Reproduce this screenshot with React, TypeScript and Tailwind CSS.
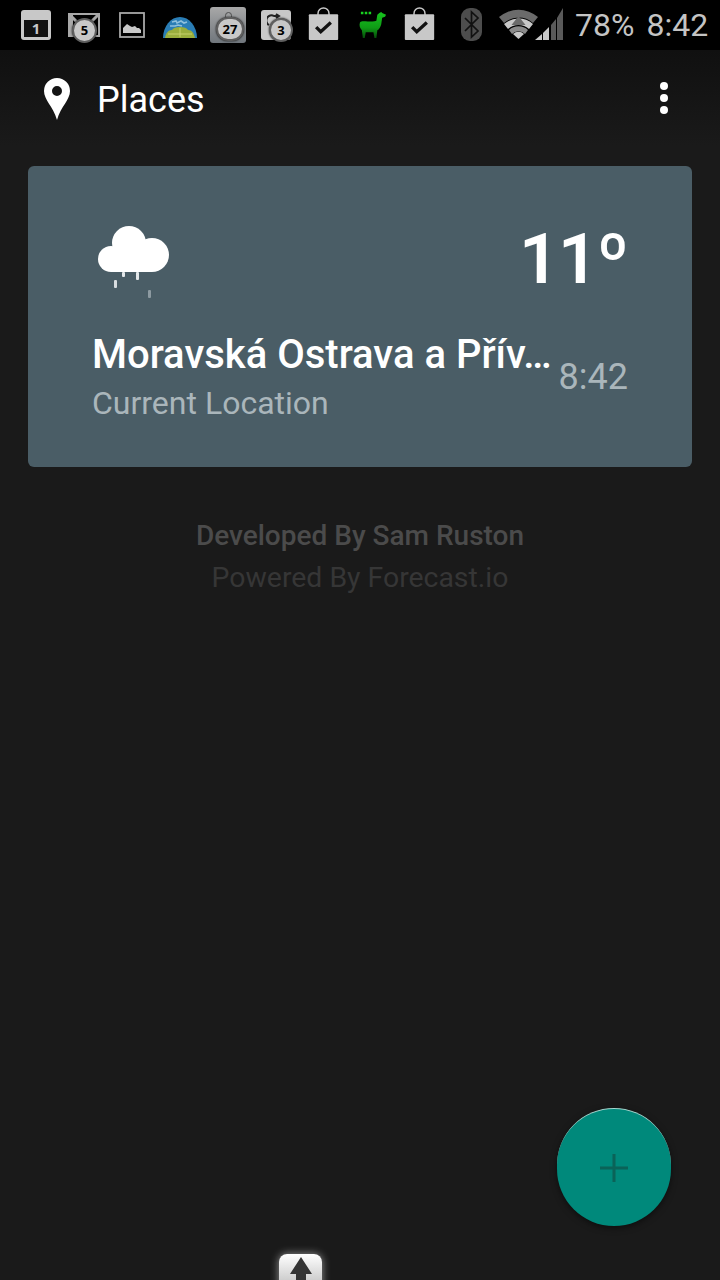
import { ReactNode } from "react";

const roboto = { fontFamily: "Roboto, sans-serif" };

const Badge = ({ value, className }: { value: string; className: string }) => (
  <span
    className={`absolute flex items-center justify-center rounded-full border-2 border-[#5f5f5f] bg-[#c8c8c8] text-[13px] font-bold leading-none text-black shadow-[0_0_2px_#000] ${className}`}
  >
    {value}
  </span>
);

const Slot = ({ className, children }: { className: string; children: ReactNode }) => (
  <div className={`relative h-[50px] shrink-0 ${className}`}>{children}</div>
);

const BagIcon = () => (
  <svg viewBox="0 0 32 36" className="absolute left-0 top-[7px] h-[33px] w-[31px]">
    <path d="M10 10V7a6 6 0 0 1 12 0v3" fill="none" stroke="#c8c8c8" strokeWidth="1.6" />
    <rect x="0" y="8" width="32" height="28" rx="1" fill="#c8c8c8" />
    <path d="M8 22l5 5 11-10" fill="none" stroke="#111" strokeWidth="3.6" />
  </svg>
);

const Llama = () => (
  <svg viewBox="0 0 30 32" className="absolute left-0 top-[9px] h-[31px] w-[29px]">
    <defs>
      <linearGradient id="llama" x1="0" y1="0" x2="0" y2="1">
        <stop offset="0" stopColor="#17c41e" />
        <stop offset="0.6" stopColor="#0f9c16" />
        <stop offset="1" stopColor="#064d0a" />
      </linearGradient>
    </defs>
    <path
      d="M22 4l2-1 1 1 4 2-1 2-3 1-1 7c-1 3-2 5-4 6l-1 8h-2l-1-6-8 0-1 6H5l-1-8c-2-2-3-5-2-8 2-2 5-1 8-1s7 0 9-1l1-6z"
      fill="url(#llama)"
    />
    <path d="M3 4h11" stroke="#19d321" strokeWidth="2.6" strokeDasharray="2.6 1.4" />
  </svg>
);

const StatusBar = () => (
  <div className="flex h-[50px] shrink-0 items-start bg-black pl-[21px]">
    {/* calendar */}
    <Slot className="w-[47px]">
      <div className="absolute left-0 top-[10px] h-[30px] w-[30px] rounded-[3px] bg-[#c8c8c8] pt-[10px]">
        <div className="mx-[3px] flex h-[17px] items-center justify-center bg-[#111] text-[15px] font-bold leading-none text-[#c8c8c8]">
          1
        </div>
      </div>
    </Slot>
    {/* gmail */}
    <Slot className="w-[51px]">
      <svg viewBox="0 0 32 24" className="absolute left-0 top-[13px] h-[24px] w-[32px]">
        <rect x="1" y="1" width="30" height="22" fill="none" stroke="#a8a8a8" strokeWidth="2" />
        <path d="M2 1h3v22H2z" fill="#a8a8a8" />
        <path d="M2 2l11 11v9M30 2L20 12" fill="none" stroke="#a8a8a8" strokeWidth="3" />
      </svg>
      <Badge value="5" className="left-[4px] top-[18px] h-[25px] w-[25px]" />
    </Slot>
    {/* gallery */}
    <Slot className="w-[44px]">
      <svg viewBox="0 0 26 26" className="absolute left-0 top-[12px] h-[26px] w-[26px]">
        <rect x="1" y="1" width="24" height="24" fill="none" stroke="#a8a8a8" strokeWidth="1.8" />
        <path d="M4 21v-5l4-4 3 2 2 1 3-1 2 2 2 0 2 2v3z" fill="#c8c8c8" />
      </svg>
    </Slot>
    {/* globe */}
    <Slot className="w-[47px]">
      <svg viewBox="0 0 34 21" className="absolute left-0 top-[17px] h-[21px] w-[34px]">
        <path d="M0 21a17 21 0 0 1 34 0z" fill="#2a7db5" />
        <path d="M9 5l4-1 1 2 4-2 3 2 3-1M7 9l5 0 3-1 4 1" fill="none" stroke="#8fc0dd" strokeWidth="1.6" />
        <path d="M2 21c1-5 3-8 7-8 1-2 4-3 8-3s7 1 8 3c4 0 6 3 7 8z" fill="#9aae3c" />
        <path d="M5 17h24M17 11v9" stroke="#c6d06c" strokeWidth="1" />
      </svg>
    </Slot>
    {/* 27 */}
    <Slot className="w-[51px]">
      <div className="absolute left-0 top-[7px] h-[36px] w-[36px] rounded-[3px] bg-gradient-to-b from-[#a8a8a8] to-[#70767c]" />
      <span className="absolute left-[15px] top-[12px] h-[8px] w-[7px] rounded-full border border-[#4c4c4c]" />
      <Badge value="27" className="left-[6px] top-[17px] h-[24px] w-[28px]" />
    </Slot>
    {/* 3 */}
    <Slot className="w-[47px]">
      <div className="absolute left-0 top-[10px] h-[30px] w-[30px] rounded-[3px] bg-[#c8c8c8]" />
      <svg viewBox="0 0 14 14" className="absolute left-[6px] top-[13px] h-[14px] w-[14px]">
        <path d="M2 12a5 5 0 0 1 5-9h5M9 1l3 2-3 2" fill="none" stroke="#222" strokeWidth="2" />
      </svg>
      <Badge value="3" className="left-[8px] top-[18px] h-[24px] w-[24px]" />
    </Slot>
    <Slot className="w-[50px]">
      <BagIcon />
    </Slot>
    <Slot className="w-[46px]">
      <Llama />
    </Slot>
    <Slot className="w-[57px]">
      <BagIcon />
    </Slot>
    {/* bluetooth */}
    <Slot className="w-[38px]">
      <svg viewBox="0 0 21 33" className="absolute left-0 top-[8px] h-[33px] w-[21px]">
        <rect width="21" height="33" rx="9" fill="#4d4d4d" />
        <path d="M4 10l13 13-6.500 6V4l6.500 6L4 23" fill="none" stroke="#111" strokeWidth="1.700" />
      </svg>
    </Slot>
    {/* wifi + signal */}
    <Slot className="w-[76px]">
      <svg viewBox="0 0 64 32" className="absolute left-0 top-[8px] h-[32px] w-[64px]">
        <path d="M0 9a30 30 0 0 1 39 0l-5 6a22 22 0 0 0-29 0z" fill="#6b6b6b" />
        <path d="M5 16a22 22 0 0 1 29 0l-4 5a16 16 0 0 0-21 0z" fill="#c8c8c8" />
        <path d="M19.500 8l7 9h-14z" fill="#6b6b6b" />
        <path d="M10 22a14 14 0 0 1 19 0l-3 4a9 9 0 0 0-13 0z" fill="#8a8a8a" />
        <path d="M14 26a8 8 0 0 1 11 0l-5.500 5z" fill="#c8c8c8" />
        <path d="M36 32l7-6v6z" fill="#c8c8c8" />
        <path d="M44 25l6-6v13h-6z" fill="#c8c8c8" />
        <path d="M52 17l5-6v21h-5z" fill="#5a5a5a" />
        <path d="M58 10l6-10v32h-6z" fill="#5a5a5a" />
      </svg>
    </Slot>
    <div className="flex h-[50px] items-center gap-[12px] pb-[1px] text-[32px] leading-none text-[#c4c4c4]" style={roboto}>
      <span>78%</span>
      <span>8:42</span>
    </div>
  </div>
);

const Toolbar = () => (
  <div className="flex h-[96px] shrink-0 items-center justify-between bg-gradient-to-b from-[#101010] to-[#1a1a1a] pl-[44px] pr-[52px]">
    <div className="flex items-center gap-[27px]">
      <svg viewBox="0 0 26 42" className="mt-[2px] h-[42px] w-[26px]">
        <path
          fillRule="evenodd"
          d="M13 0a13 13 0 0 1 13 13c0 9-9 15-13 29C9 28 0 22 0 13A13 13 0 0 1 13 0zm0 8a5 5 0 1 0 0 10 5 5 0 0 0 0-10z"
          fill="#fff"
        />
      </svg>
      <span className="mt-[4px] text-[36px] leading-none text-white" style={roboto}>
        Places
      </span>
    </div>
    <div className="flex flex-col gap-[4px]">
      <span className="h-[8px] w-[8px] rounded-full bg-white" />
      <span className="h-[8px] w-[8px] rounded-full bg-white" />
      <span className="h-[8px] w-[8px] rounded-full bg-white" />
    </div>
  </div>
);

const RainCloud = () => (
  <svg viewBox="0 0 72 72" className="h-[72px] w-[72px]">
    <circle cx="13" cy="33" r="13" fill="#fff" />
    <circle cx="31" cy="17" r="17" fill="#fff" />
    <circle cx="54" cy="29" r="17" fill="#fff" />
    <rect x="13" y="28" width="41" height="18" fill="#fff" />
    <rect x="24" y="46" width="3" height="5" rx="1" fill="#e4e8ea" />
    <rect x="38" y="46" width="3" height="8" rx="1" fill="#e4e8ea" />
    <rect x="16" y="54" width="3" height="8" rx="1" fill="#d8dde0" />
    <rect x="50" y="64" width="3" height="8" rx="1" fill="#8d9aa1" />
  </svg>
);

const LocationCard = () => (
  <div className="mx-[28px] mt-[20px] h-[301px] shrink-0 rounded-[6px] bg-[#4a5d66] pl-[64px] pr-[64px] pt-[60px]" style={roboto}>
    <div className="flex h-[72px] items-start justify-between pl-[6px]">
      <RainCloud />
      <span className="text-[70px] font-semibold leading-[66px] tracking-[-1px] text-white">11º</span>
    </div>
    <div className="mt-[34px] flex items-start justify-between">
      <div className="w-[462px] shrink-0">
        <div className="whitespace-nowrap text-[40px] font-medium leading-[46px] text-white">
          Moravská Ostrava a Přív…
        </div>
        <div className="mt-[6px] text-[32px] leading-[38px] text-[#aab6bb]">Current Location</div>
      </div>
      <span className="mt-[24px] text-[36px] leading-[42px] text-[#aab6bb]">8:42</span>
    </div>
  </div>
);

export default function App() {
  return (
    <div className="relative flex h-[1280px] w-[720px] flex-col overflow-hidden bg-[#1a1a1a]">
      <StatusBar />
      <Toolbar />
      <LocationCard />

      <div className="mt-[50px] flex flex-col items-center" style={roboto}>
        <span className="text-[28px] font-medium leading-[38px] text-[#4b4b4b]">Developed By Sam Ruston</span>
        <span className="mt-[4px] text-[28.4px] leading-[38px] text-[#363636]">Powered By Forecast.io</span>
      </div>

      {/* add button */}
      <button className="absolute left-[557px] top-[1108px] flex h-[118px] w-[114px] items-center justify-center rounded-full border-t border-[#a5d6cf] bg-[#00897b] shadow-[0_2px_6px_rgba(0,0,0,0.5)]">
        <svg viewBox="0 0 28 28" className="h-[28px] w-[28px]">
          <path d="M14 0v28M0 14h28" stroke="#0a6358" strokeWidth="3" />
        </svg>
      </button>

      {/* handle peeking at the bottom */}
      <div className="absolute left-[279px] top-[1254px] flex h-[40px] w-[43px] justify-center rounded-[8px] bg-gradient-to-b from-white to-[#b5b5b5] shadow-[0_0_8px_rgba(255,255,255,0.55)]">
        <svg viewBox="0 0 22 26" className="mt-[3px] h-[26px] w-[22px] blur-[0.5px]">
          <path d="M11 0l11 17h-6v9H6v-9H0z" fill="#333" />
        </svg>
      </div>
    </div>
  );
}
